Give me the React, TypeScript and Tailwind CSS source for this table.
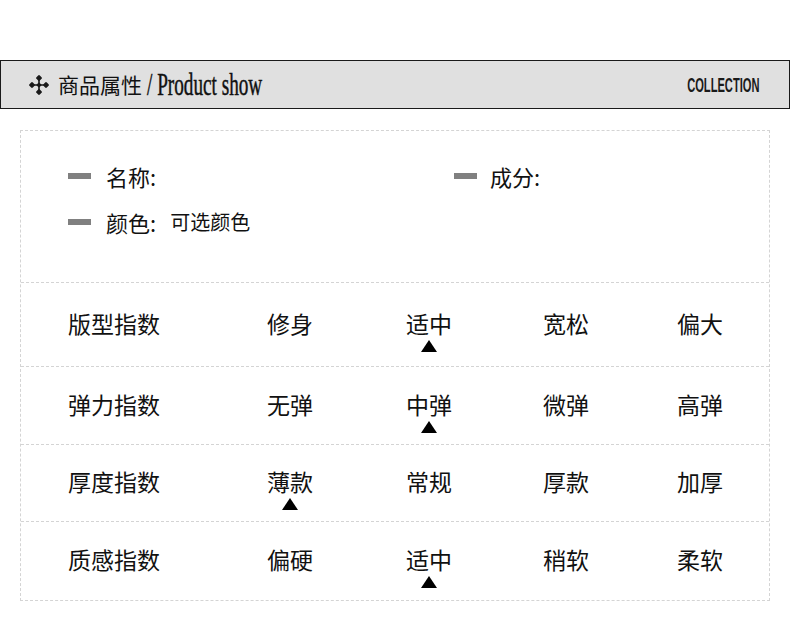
import React from "react";

const cjk = "font-['Noto_Sans_CJK_SC','Noto_Sans',sans-serif]";

type Row = { label: string; items: string[]; mark: number; h: string };

const rows: Row[] = [
  { label: "版型指数", items: ["修身", "适中", "宽松", "偏大"], mark: 1, h: "h-[84px]" },
  { label: "弹力指数", items: ["无弹", "中弹", "微弹", "高弹"], mark: 1, h: "h-[78px]" },
  { label: "厚度指数", items: ["薄款", "常规", "厚款", "加厚"], mark: 0, h: "h-[77px]" },
  { label: "质感指数", items: ["偏硬", "适中", "稍软", "柔软"], mark: 1, h: "h-[78px]" },
];

function CrossIcon() {
  return (
    <svg width="20" height="20" viewBox="0 0 20 20" className="shrink-0">
      <path d="M10 3v14M3 10h14" stroke="#1a1a1a" strokeWidth="1.6" />
      <rect x="7.6" y="0.6" width="4.8" height="4.8" rx="1.2" transform="rotate(45 10 3)" fill="#1a1a1a" />
      <rect x="7.6" y="14.6" width="4.8" height="4.8" rx="1.2" transform="rotate(45 10 17)" fill="#1a1a1a" />
      <rect x="0.6" y="7.6" width="4.8" height="4.8" rx="1.2" transform="rotate(45 3 10)" fill="#1a1a1a" />
      <rect x="14.6" y="7.6" width="4.8" height="4.8" rx="1.2" transform="rotate(45 17 10)" fill="#1a1a1a" />
      <rect x="8" y="8" width="4" height="4" rx="1" transform="rotate(45 10 10)" fill="#1a1a1a" />
    </svg>
  );
}

function Marker() {
  return (
    <svg width="16" height="12" viewBox="0 0 16 12" className="absolute left-1/2 top-full -translate-x-1/2 mt-[5px]">
      <polygon points="8,0 16,12 0,12" fill="#000" />
    </svg>
  );
}

function InfoItem({ label, value, gap }: { label: string; value?: string; gap: string }) {
  return (
    <div className="flex items-center h-[30px]">
      <span className="w-[23px] h-[6px] bg-[#808080] shrink-0" />
      <span className={`${gap} text-[22px] text-[#111]`}>{label}:</span>
      {value && <span className="ml-[14px] text-[20px] text-[#111]">{value}</span>}
    </div>
  );
}

export default function App() {
  return (
    <div className={`w-[790px] h-[624px] bg-white pt-[60px] overflow-hidden ${cjk}`}>
      {/* title bar */}
      <div className="h-[49px] border border-[#1a1a1a] bg-[#e0e0e0] flex items-center">
        <div className="ml-[28px]">
          <CrossIcon />
        </div>
        <span className="ml-[9px] text-[21px] text-[#111] leading-none">商品属性</span>
        <span className="ml-[5px] inline-block origin-left scale-x-[0.6] whitespace-nowrap font-['Liberation_Serif',serif] text-[32px] leading-none text-[#111] pb-[2px] [-webkit-text-stroke:0.5px_#111]">
          / Product show
        </span>
        <span className="ml-auto mr-[30px] inline-block origin-right scale-x-[0.53] font-['Liberation_Sans',sans-serif] font-bold text-[21px] leading-none text-[#1a1a1a]">
          COLLECTION
        </span>
      </div>

      {/* attribute box */}
      <div className="mt-[21px] mx-[20px] border border-dashed border-[#d4d4d4]">
        <div className="h-[152px] border-b border-dashed border-[#d4d4d4] pl-[47px] pt-[30px] grid grid-cols-[386px_1fr] gap-y-[16px] content-start">
          <InfoItem label="名称" gap="ml-[15px]" />
          <InfoItem label="成分" gap="ml-[13px]" />
          <InfoItem label="颜色" value="可选颜色" gap="ml-[15px]" />
        </div>

        {rows.map((r, ri) => (
          <div
            key={r.label}
            className={`${r.h} pb-[3px] grid grid-cols-[201px_136px_142px_132px_136px] items-center ${
              ri < rows.length - 1 ? "border-b border-dashed border-[#d4d4d4]" : ""
            }`}
          >
            <span className="pl-[47px] text-[23px] text-[#111] leading-none">{r.label}</span>
            {r.items.map((it, i) => (
              <div key={i} className="flex justify-center">
                <span className="relative text-[23px] text-[#111] leading-none">
                  {it}
                  {i === r.mark && <Marker />}
                </span>
              </div>
            ))}
          </div>
        ))}
      </div>
    </div>
  );
}
